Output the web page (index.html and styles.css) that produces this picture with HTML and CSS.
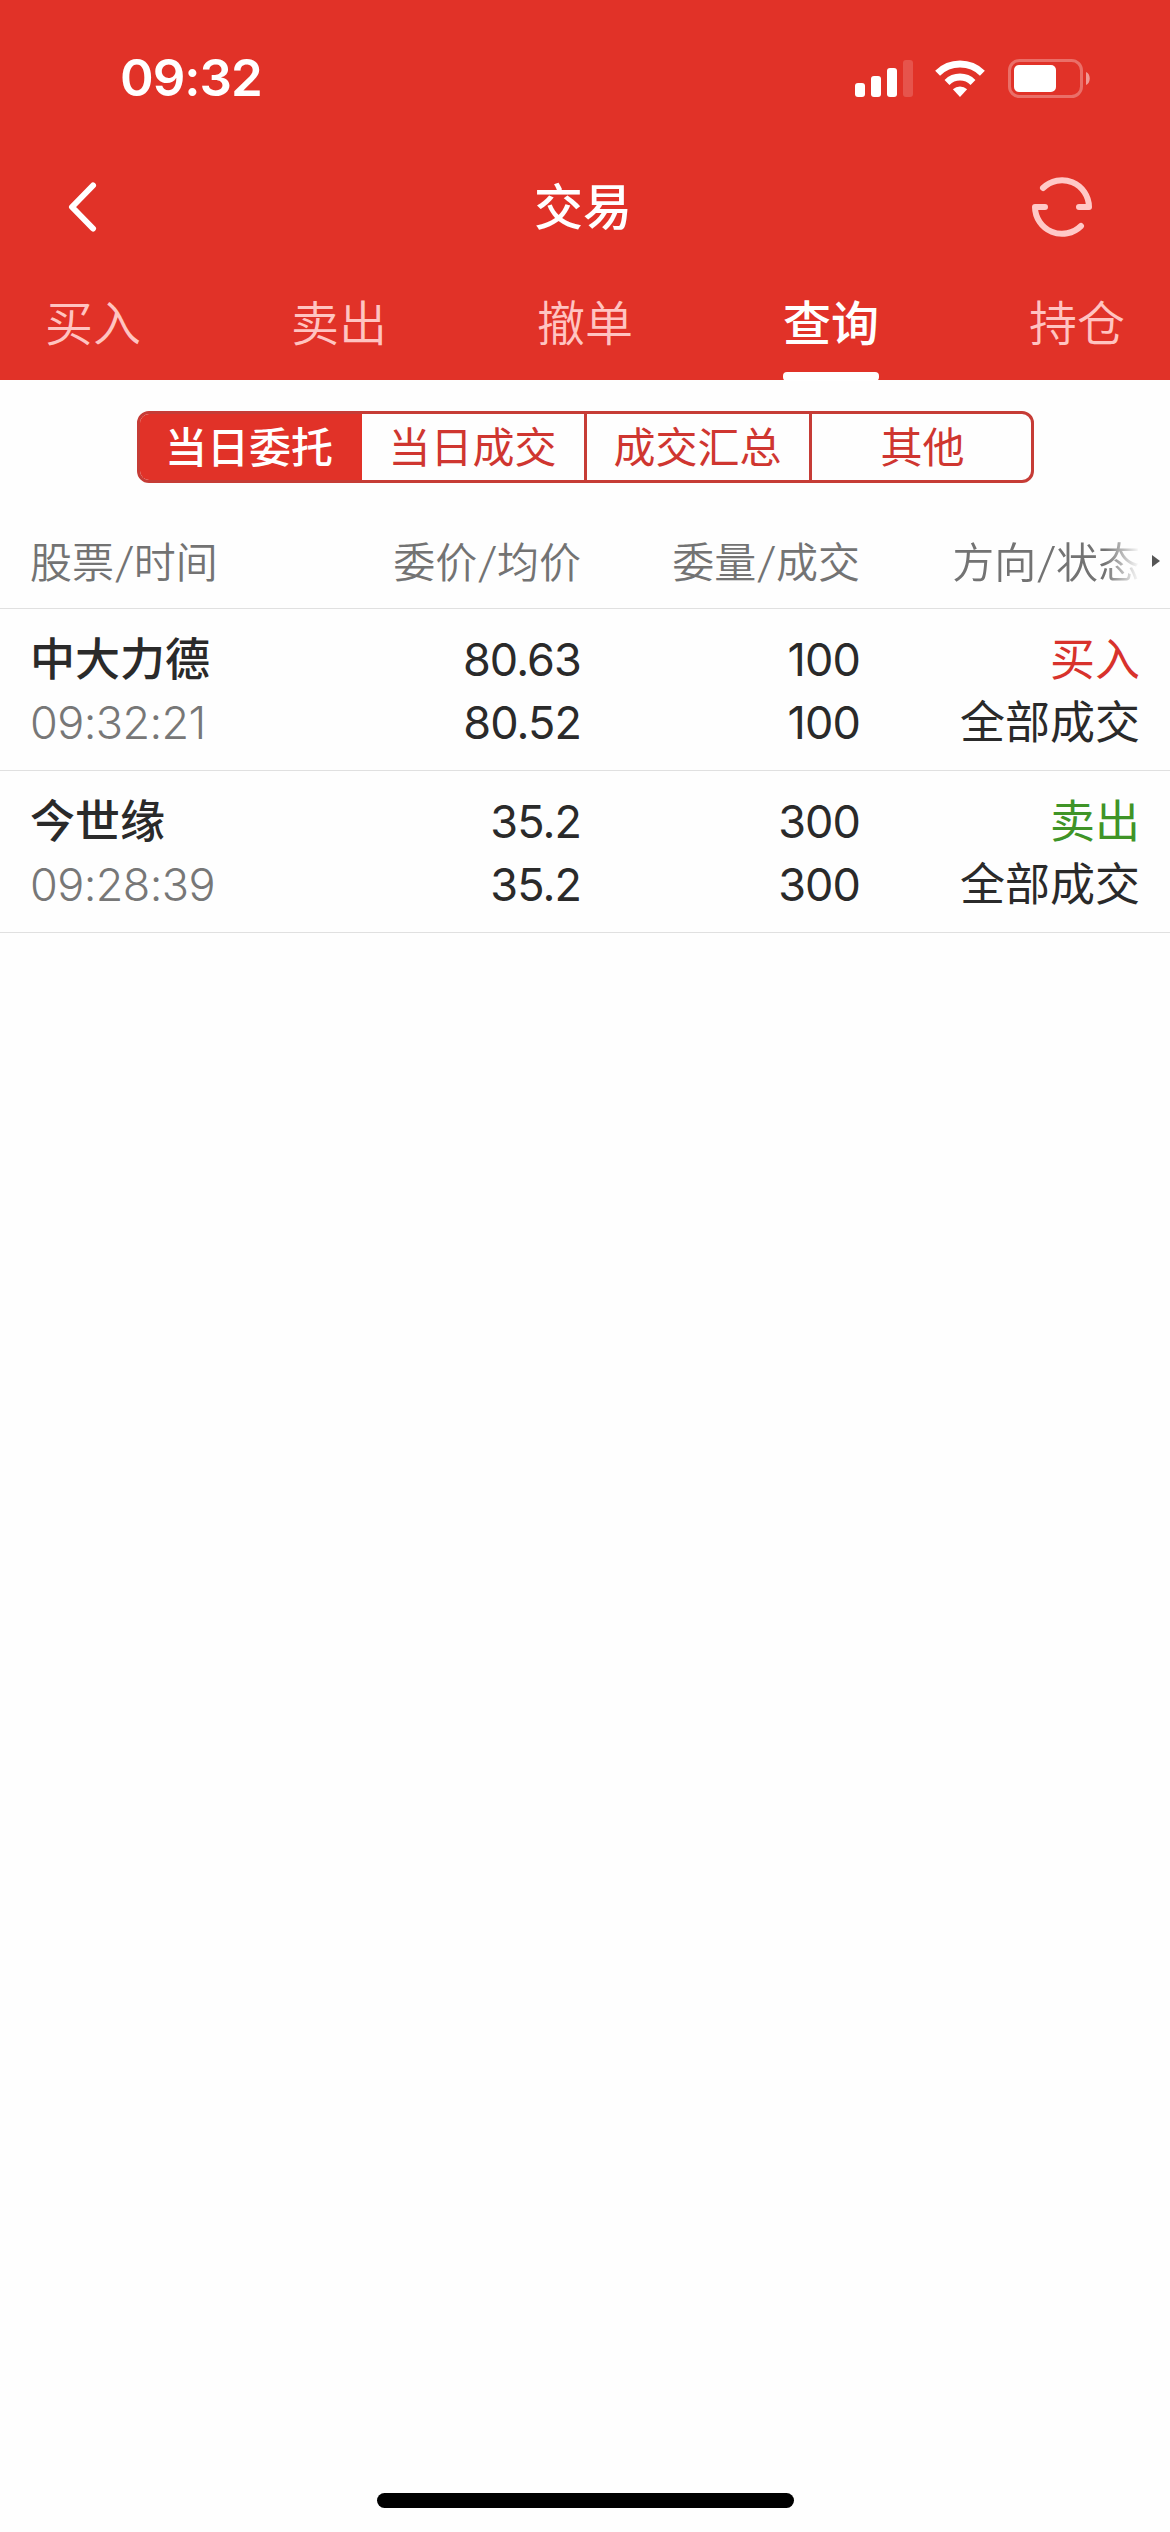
FILE: index.html
```
<!DOCTYPE html>
<html lang="zh-CN">
<head>
    <meta charset="UTF-8">
    <meta name="viewport" content="width=device-width, initial-scale=1.0">
    <title>交易</title>
    <link rel="stylesheet" href="styles.css">
</head>
<body>
    <header class="header">
        <div class="status-bar">
            <span class="clock">09:32</span>
            <div class="status-icons">
                <svg class="signal" width="58" height="37" viewBox="0 0 58 37" fill="#fff">
                    <rect x="0" y="23" width="10" height="14" rx="3"/>
                    <rect x="16" y="16" width="10" height="21" rx="3"/>
                    <rect x="32" y="8" width="10" height="29" rx="3"/>
                    <rect x="48" y="0" width="10" height="37" rx="3" opacity="0.17"/>
                </svg>
                <svg class="wifi" width="50" height="37" viewBox="0 0 50 37">
                    <g fill="none" stroke="#fff" stroke-width="7">
                        <path d="M2.6 13.2a32 32 0 0 1 44.8 0"/>
                        <path d="M12 22.4a18.6 18.6 0 0 1 26 0"/>
                    </g>
                    <path fill="#fff" d="M17.9 29.3a10.4 10.4 0 0 1 14.2 0L25 37z"/>
                </svg>
                <svg class="battery" width="83" height="39" viewBox="0 0 83 39">
                    <rect x="1.5" y="1.5" width="72" height="36" rx="10" fill="none" stroke="#fff" stroke-width="3" opacity="0.3"/>
                    <rect x="6" y="6" width="42" height="27" rx="5" fill="#fff"/>
                    <path d="M78 13c5 2 5 11 0 13z" fill="#fff" opacity="0.5"/>
                </svg>
            </div>
        </div>

        <div class="title-bar">
            <svg width="30" height="50" viewBox="0 0 30 50" fill="none" stroke="#fff" stroke-width="6" stroke-linecap="round" stroke-linejoin="round">
                <path d="M25 3.5L4 25l21 21.5"/>
            </svg>
            <h1>交易</h1>
            <svg width="60" height="60" viewBox="0 0 60 60" fill="none" stroke="#ffc9c7" stroke-width="6" stroke-linecap="round" stroke-linejoin="round">
                <path d="M11 11A27 27 0 0 1 57 30H47"/>
                <path d="M13 30H3a27 27 0 0 0 46 19"/>
            </svg>
        </div>

        <nav class="tabs">
            <a class="tab">买入</a>
            <a class="tab">卖出</a>
            <a class="tab">撤单</a>
            <a class="tab active">查询</a>
            <a class="tab">持仓</a>
        </nav>
    </header>

    <main>
        <div class="segments">
            <button class="segment selected">当日委托</button>
            <button class="segment">当日成交</button>
            <button class="segment">成交汇总</button>
            <button class="segment">其他</button>
        </div>

        <div class="row table-head">
            <span>股票<i>/</i>时间</span>
            <span>委价<i>/</i>均价</span>
            <span>委量<i>/</i>成交</span>
            <span class="faded">方向<i>/</i>状态</span>
            <div class="more"></div>
        </div>

        <div class="row order">
            <div><b>中大力德</b><span class="num time">09:32:21</span></div>
            <div class="num"><span>80.63</span><span>80.52</span></div>
            <div class="num"><span>100</span><span>100</span></div>
            <div><span class="buy">买入</span><span>全部成交</span></div>
        </div>

        <div class="row order">
            <div><b>今世缘</b><span class="num time">09:28:39</span></div>
            <div class="num"><span>35.2</span><span>35.2</span></div>
            <div class="num"><span>300</span><span>300</span></div>
            <div><span class="sell">卖出</span><span>全部成交</span></div>
        </div>
    </main>

    <div class="home-indicator"></div>
</body>
</html>
```
FILE: styles.css
```
* {
    box-sizing: border-box;
}

body {
    margin: 0;
    height: 2532px;
    display: flex;
    flex-direction: column;
    background-color: #fefefe;
    color: #2a2a2a;
    font-family: Inter, "Noto Sans CJK SC", sans-serif;
    overflow: hidden;
}

.header {
    height: 380px;
    background-color: #e13228;
    color: #fff;
}

.status-bar {
    height: 156px;
    padding: 0 79px 0 120px;
    display: flex;
    justify-content: space-between;
    align-items: center;
}

.clock {
    font-size: 51px;
    font-weight: 560;
    line-height: 60px;
    letter-spacing: -1px;
}

.status-icons {
    display: flex;
    align-items: center;
}

.wifi {
    margin-left: 22px;
    margin-right: 23px;
}

svg {
    display: block;
}

.title-bar {
    height: 102px;
    padding: 0 78px 0 68px;
    display: grid;
    grid-template-columns: 60px 1fr 60px;
    align-items: center;
}

.title-bar h1 {
    margin: 2px 0 0 6px;
    font-size: 49px;
    font-weight: 500;
    line-height: 60px;
    text-align: center;
}

.tabs {
    height: 122px;
    padding: 0 45px;
    display: flex;
    justify-content: space-between;
}

.tab {
    position: relative;
    width: 96px;
    font-size: 48px;
    font-weight: 350;
    line-height: 131px;
    color: #ffc4c1;
}

.tab.active {
    color: #fff;
    font-weight: 500;
}

.tab.active::after {
    content: "";
    position: absolute;
    left: 0;
    top: 114px;
    width: 96px;
    height: 9px;
    border-radius: 4px;
    background-color: #fff;
}

.segments {
    width: 897px;
    height: 72px;
    margin: 31px auto 0;
    display: grid;
    grid-template-columns: 222px 225px 225px 1fr;
    border: 3px solid #c63c36;
    border-radius: 12px;
    overflow: hidden;
}

.segment {
    padding: 0;
    border: none;
    border-right: 3px solid #c63c36;
    background: none;
    color: #cf3630;
    font: inherit;
    font-size: 42px;
    line-height: 68px;
}

.segment:last-child {
    border-right: none;
    padding-left: 3px;
}

.segment.selected {
    background-color: #e13228;
    border-color: #e13228;
    color: #fff;
    font-weight: 500;
}

.row {
    position: relative;
    padding: 0 30px;
    display: grid;
    grid-template-columns: 272px 279px 279px 280px;
    border-bottom: 1px solid #e0e0e0;
    text-align: right;
}

.row > :first-child {
    text-align: left;
}

.table-head {
    height: 126px;
    font-size: 42px;
    font-weight: 350;
    line-height: 160px;
    color: #737373;
}

.table-head i {
    display: inline-block;
    margin: 0 2px 0 3px;
    font-style: normal;
    transform: skewX(-8deg);
}

.faded {
    -webkit-mask-image: linear-gradient(to right, #000 245px, transparent 280px);
    mask-image: linear-gradient(to right, #000 245px, transparent 280px);
}

/* scroll hint at the right edge */
.more {
    position: absolute;
    right: 10px;
    top: 72px;
    border: solid transparent;
    border-width: 6px 0 6px 8px;
    border-left-color: #555;
}

.order {
    height: 162px;
    padding-top: 19px;
    font-size: 45px;
    line-height: 63px;
}

.order span,
.order b {
    display: block;
}

.order b {
    font-weight: 500;
}

.order .num {
    letter-spacing: -0.9px;
    font-weight: 370;
}

.order .time {
    font-weight: 320;
    letter-spacing: -0.6px;
    color: #777;
}

.order .buy {
    color: #d8322c;
}

.order .sell {
    color: #3f9427;
}

.home-indicator {
    width: 417px;
    height: 15px;
    margin: auto auto 24px;
    border-radius: 8px;
    background-color: #000;
}
```
